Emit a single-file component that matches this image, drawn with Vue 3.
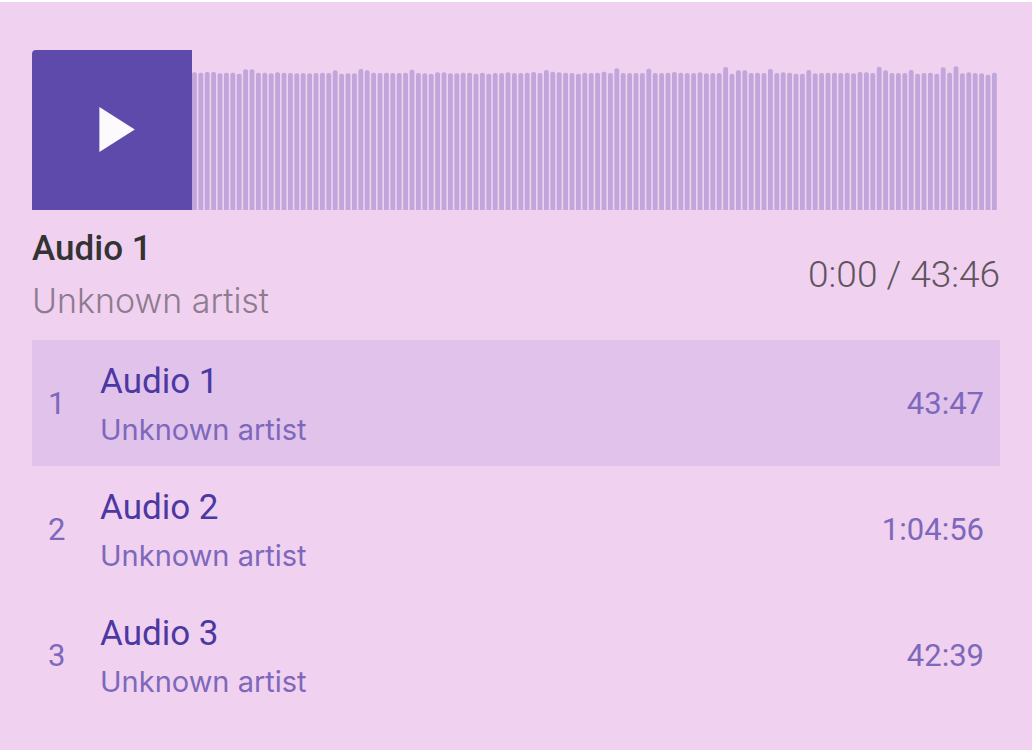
<script setup>
import { ref } from 'vue'

const tracks = [
  { title: 'Audio 1', artist: 'Unknown artist', duration: '43:47' },
  { title: 'Audio 2', artist: 'Unknown artist', duration: '1:04:56' },
  { title: 'Audio 3', artist: 'Unknown artist', duration: '42:39' },
]

const current = ref(0)

// Waveform peaks, in thirds of a unit below the tallest possible bar.
const peaks = [
  52, 53, 51, 51, 55, 53, 53, 56, 43, 43, 53, 53, 55, 52, 53, 54, 55, 54, 55, 54,
  53, 54, 46, 56, 55, 55, 42, 46, 53, 54, 53, 54, 54, 53, 44, 54, 55, 56, 52, 52,
  55, 55, 53, 53, 56, 53, 56, 54, 54, 52, 54, 54, 53, 51, 54, 45, 50, 52, 53, 54,
  56, 53, 54, 53, 50, 54, 40, 54, 54, 54, 54, 41, 54, 54, 53, 51, 53, 54, 54, 52,
  55, 54, 54, 36, 56, 46, 46, 54, 53, 54, 42, 54, 52, 53, 56, 56, 45, 55, 54, 53,
  53, 54, 53, 55, 51, 52, 54, 35, 46, 54, 54, 54, 45, 56, 54, 53, 56, 37, 53, 34,
  55, 52, 54, 55, 59, 53,
]
const bars = peaks.map((p, i) => ({ x: i * 6.4, y: 5 + p / 3 }))
</script>

<template>
  <main class="player">
    <section class="stage">
      <button class="play" type="button" aria-label="Play">
        <svg viewBox="0 0 160 160" aria-hidden="true">
          <path d="M67.4 57v45L102.8 79.500Z" />
        </svg>
      </button>
      <svg class="wave" viewBox="0 0 808 160" preserveAspectRatio="none" aria-hidden="true">
        <rect v-for="(b, i) in bars" :key="i" :x="b.x" :y="b.y" width="4.8" height="180" rx="2" />
      </svg>
    </section>

    <section class="now">
      <div class="names">
        <h1 class="now-title">{{ tracks[current].title }}</h1>
        <p class="now-artist">{{ tracks[current].artist }}</p>
      </div>
      <div class="time">0:00 / 43:46</div>
    </section>

    <ol class="list">
      <li v-for="(t, i) in tracks" :key="i">
        <button class="row" :class="{ active: i === current }" type="button" @click="current = i">
          <span class="num">{{ i + 1 }}</span>
          <span class="info">
            <span class="title">{{ t.title }}</span>
            <span class="artist">{{ t.artist }}</span>
          </span>
          <span class="duration">{{ t.duration }}</span>
        </button>
      </li>
    </ol>
  </main>
</template>

<style>
body {
  background: #f1d1f0;
}
</style>

<style scoped>
.player {
  box-sizing: border-box;
  min-height: 100vh;
  padding: 48px 32px 32px;
  border-top: 2px solid #fff;
  background: #f1d1f0;
  font-family: Roboto, "Liberation Sans", sans-serif;
}
.stage {
  display: flex;
  height: 160px;
}
.play {
  flex: none;
  width: 160px;
  padding: 0;
  border: 0;
  border-radius: 4px 0 0 0;
  background: #5e4aab;
  cursor: pointer;
}
.play svg {
  display: block;
  fill: #fcfafd;
}
.wave {
  flex: 1;
  min-width: 0;
  height: 160px;
  fill: #c0a6da;
}
.now {
  display: flex;
  align-items: center;
  justify-content: space-between;
  height: 130px;
}
.now-title,
.now-artist {
  margin: 0;
  line-height: 52px;
}
.now-title {
  font-size: 35px;
  font-weight: 500;
  color: #333;
}
.now-artist {
  font-family: Inter, "Liberation Sans", sans-serif;
  font-size: 34px;
  font-weight: 300;
  color: #8d7c8f;
}
.time {
  font-size: 37px;
  font-weight: 300;
  line-height: 52px;
  color: #60545f;
}
.list {
  margin: 0;
  padding: 0;
  list-style: none;
}
.row {
  display: flex;
  align-items: center;
  width: 100%;
  height: 126px;
  padding: 0 16px;
  border: 0;
  background: transparent;
  font-family: inherit;
  font-size: 31px;
  text-align: left;
  color: #7d68bb;
  cursor: pointer;
}
.row.active {
  background: #e1c2ea;
}
.num {
  flex: none;
  width: 52px;
}
.info {
  flex: 1;
  padding-top: 6px;
}
.title,
.artist {
  display: block;
  line-height: 48px;
}
.title {
  font-size: 35px;
  color: #4b38a2;
}
.artist {
  font-family: Inter, "Liberation Sans", sans-serif;
  font-size: 29px;
}
</style>
